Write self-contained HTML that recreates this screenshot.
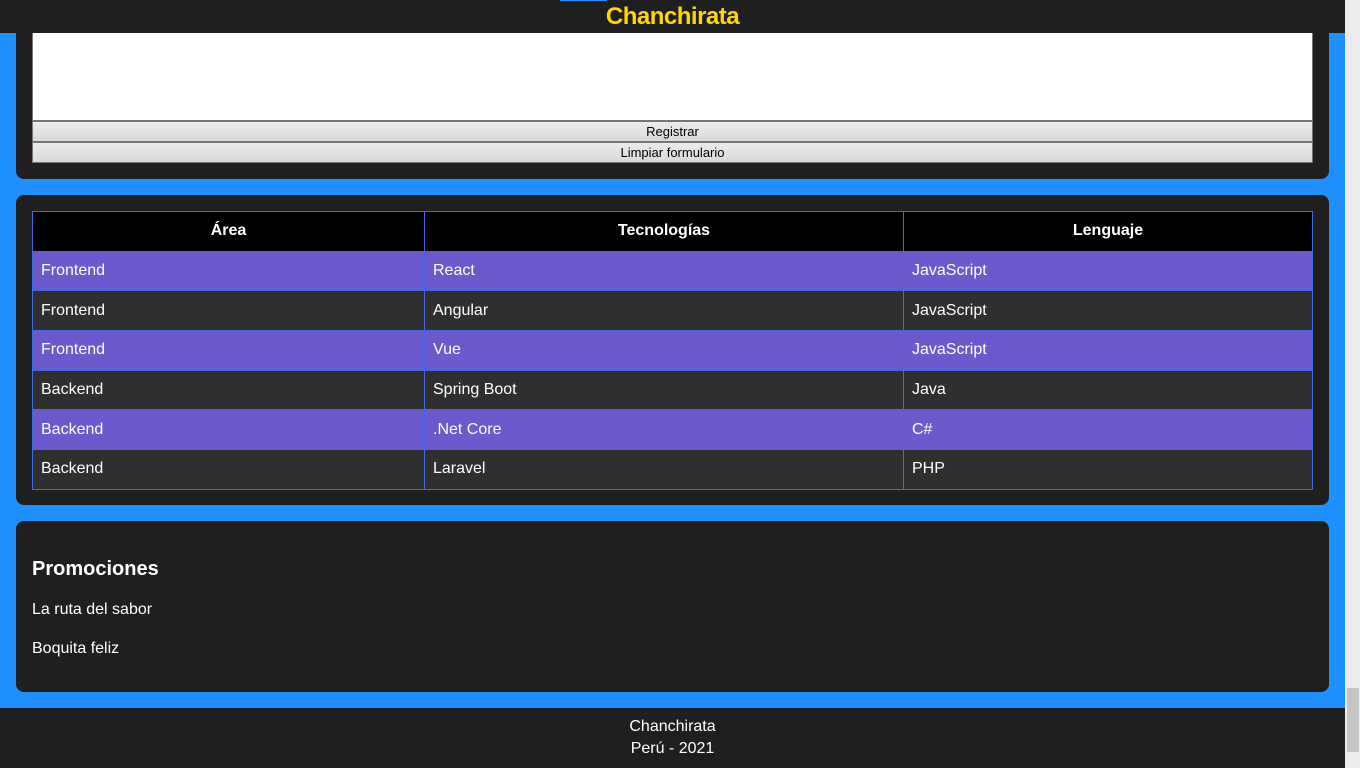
<!DOCTYPE html>
<html><head><meta charset="utf-8"><style>
*{box-sizing:border-box;margin:0;padding:0}
body{width:1360px;height:768px;overflow:hidden;background:#1e90ff;font-family:"Liberation Sans",sans-serif;position:relative}
.hdr{position:absolute;left:0;top:0;width:1345px;height:33px;background:#1f1f1f;text-align:center}
.hdr .t{position:absolute;left:0;width:1345px;top:3px;color:#ffd700;font-size:24px;font-weight:bold;letter-spacing:-0.5px}
.hdr .bar{position:absolute;left:560px;top:0;width:47px;height:1px;background:#1e90ff}
.sec{position:absolute;left:16px;width:1313px;background:#1f1f1f;border-radius:8px}
.ta{position:absolute;left:32px;top:33px;width:1281px;height:88px;background:#fff;border:1px solid #767676;border-top:none}
.btn{position:absolute;left:32px;width:1281px;height:21px;background:linear-gradient(#ececec,#d8d8d8);border:1px solid #767676;font-size:13px;text-align:center;line-height:19px;color:#000}
table{position:absolute;left:32px;top:211px;width:1281px;border-collapse:collapse;color:#fff;font-size:16px}
td,th{border:1px solid #4169e1;height:39.7px;padding:0 8px;text-align:left}
th{background:#000;text-align:center;font-weight:bold}
tr.p td{background:#6a5acd}
tr.d td{background:#2f2f2f}
.promo{color:#fff}
.footer{position:absolute;left:0;top:708px;width:1345px;height:60px;background:#1f1f1f;color:#fff;text-align:center;font-size:16px;line-height:22px;padding-top:8px}
.sb{position:absolute;left:1345px;top:0;width:15px;height:768px;background:#ececec}
.thumb{position:absolute;left:1347px;top:688px;width:12px;height:64px;background:#c4c4c4}
</style></head><body>
<div class="sec" style="top:20px;height:159px"></div>
<div class="ta"></div>
<div class="btn" style="top:121px">Registrar</div>
<div class="btn" style="top:142px">Limpiar formulario</div>
<div class="sec" style="top:195px;height:310px"></div>
<table>
<tr><th style="width:392px">Área</th><th style="width:479px">Tecnologías</th><th>Lenguaje</th></tr>
<tr class="p"><td>Frontend</td><td>React</td><td>JavaScript</td></tr>
<tr class="d"><td>Frontend</td><td>Angular</td><td>JavaScript</td></tr>
<tr class="p"><td>Frontend</td><td>Vue</td><td>JavaScript</td></tr>
<tr class="d"><td>Backend</td><td>Spring Boot</td><td>Java</td></tr>
<tr class="p"><td>Backend</td><td>.Net Core</td><td>C#</td></tr>
<tr class="d"><td>Backend</td><td>Laravel</td><td>PHP</td></tr>
</table>
<div class="sec" style="top:521px;height:171px">
<div class="promo" style="position:absolute;left:16px;top:37px;font-size:20px;font-weight:bold">Promociones</div>
<div class="promo" style="position:absolute;left:16px;top:80px;font-size:16px">La ruta del sabor</div>
<div class="promo" style="position:absolute;left:16px;top:119px;font-size:16px">Boquita feliz</div>
</div>
<div class="footer">Chanchirata<br>Perú - 2021</div>
<div class="hdr"><div class="bar"></div><div class="t">Chanchirata</div></div>
<div class="sb"></div><div class="thumb"></div>
</body></html>
